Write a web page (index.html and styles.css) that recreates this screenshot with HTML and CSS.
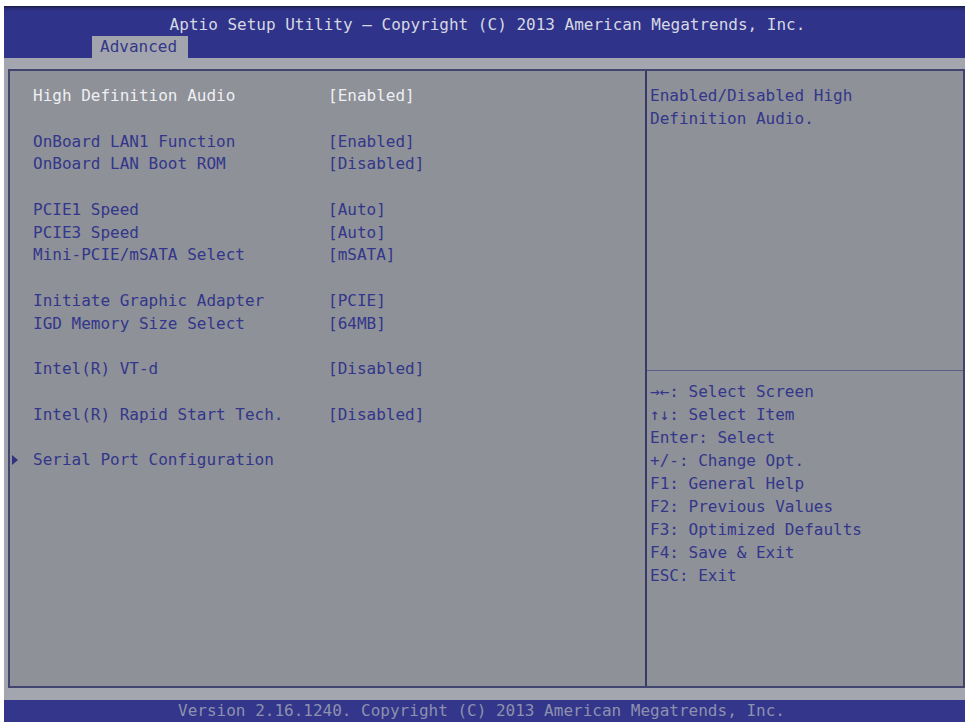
FILE: index.html
```html
<!DOCTYPE html>
<html>
<head>
<meta charset="utf-8">
<link rel="stylesheet" href="styles.css">
</head>
<body>
<div class="screen">
  <header class="header">
    <div class="title">Aptio Setup Utility – Copyright (C) 2013 American Megatrends, Inc.</div>
    <div class="tabs"><div class="tab">Advanced</div></div>
  </header>
  <main class="body">
    <div class="frame">
      <section class="left">
        <div class="row hl"><span class="label">High Definition Audio</span><span class="val">[Enabled]</span></div>
        <div class="row blank"></div>
        <div class="row"><span class="label">OnBoard LAN1 Function</span><span class="val">[Enabled]</span></div>
        <div class="row"><span class="label">OnBoard LAN Boot ROM</span><span class="val">[Disabled]</span></div>
        <div class="row blank"></div>
        <div class="row"><span class="label">PCIE1 Speed</span><span class="val">[Auto]</span></div>
        <div class="row"><span class="label">PCIE3 Speed</span><span class="val">[Auto]</span></div>
        <div class="row"><span class="label">Mini-PCIE/mSATA Select</span><span class="val">[mSATA]</span></div>
        <div class="row blank"></div>
        <div class="row"><span class="label">Initiate Graphic Adapter</span><span class="val">[PCIE]</span></div>
        <div class="row"><span class="label">IGD Memory Size Select</span><span class="val">[64MB]</span></div>
        <div class="row blank"></div>
        <div class="row"><span class="label">Intel(R) VT-d</span><span class="val">[Disabled]</span></div>
        <div class="row blank"></div>
        <div class="row"><span class="label">Intel(R) Rapid Start Tech.</span><span class="val">[Disabled]</span></div>
        <div class="row blank"></div>
        <div class="row sub"><span class="marker"></span><span class="label">Serial Port Configuration</span></div>
      </section>
      <aside class="right">
        <div class="help">
          <div class="line">Enabled/Disabled High</div>
          <div class="line">Definition Audio.</div>
        </div>
        <div class="keys">
          <div class="line">→←: Select Screen</div>
          <div class="line">↑↓: Select Item</div>
          <div class="line">Enter: Select</div>
          <div class="line">+/-: Change Opt.</div>
          <div class="line">F1: General Help</div>
          <div class="line">F2: Previous Values</div>
          <div class="line">F3: Optimized Defaults</div>
          <div class="line">F4: Save &amp; Exit</div>
          <div class="line">ESC: Exit</div>
        </div>
      </aside>
    </div>
  </main>
  <footer class="footer">Version 2.16.1240. Copyright (C) 2013 American Megatrends, Inc.</footer>
</div>
</body>
</html>
```

FILE: styles.css
```css
html, body {
  margin: 0;
  padding: 0;
  background: #ffffff;
}
body {
  font-family: "DejaVu Sans Mono", "Liberation Mono", monospace;
  font-size: 16px;
}
.screen {
  margin: 6px 6px 0 4px;
  width: 961px;
  display: flex;
  flex-direction: column;
}
.header {
  height: 52px;
  background: linear-gradient(#1a1d45 0px, #2b2e7e 3px, #30338a 6px, #30338a 100%);
  display: flex;
  flex-direction: column;
  justify-content: space-between;
}
.title {
  color: #d6d8e2;
  text-align: center;
  padding-top: 10px;
  line-height: 18px;
  padding-left: 6px;
}
.tabs {
  display: flex;
  padding-left: 88px;
}
.tab {
  width: 96px;
  height: 22px;
  background: #a2a5ae;
  color: #353887;
  line-height: 22px;
  padding-left: 8px;
  box-sizing: border-box;
}
.body {
  background: #a3a6ae;
  padding: 11px 0 12px 4px;
}
.frame {
  height: 619px;
  box-sizing: border-box;
  border: 2px solid #40446f;
  background: #8e9198;
  display: flex;
}
.left {
  width: 637px;
  border-right: 2px solid #363a68;
  padding: 14px 0 0 23px;
  box-sizing: border-box;
}
.row {
  display: flex;
  height: 22.75px;
  line-height: 22.75px;
  color: #33368a;
  white-space: pre;
}
.label {
  width: 295px;
}
.hl {
  color: #eeeff3;
}
.marker {
  width: 0;
  height: 0;
  border-left: 6px solid #303380;
  border-top: 5px solid transparent;
  border-bottom: 5px solid transparent;
  margin: 6px 15px 0 -21px;
}
.right {
  flex: 1;
  display: flex;
  flex-direction: column;
  color: #33368a;
}
.help {
  padding: 14px 0 0 3px;
  height: 285px;
  border-bottom: 1px solid #5a5e86;
}
.help .line {
  line-height: 22.5px;
}
.keys {
  padding: 9px 0 0 3px;
}
.keys .line {
  line-height: 23px;
}
.footer {
  height: 22px;
  line-height: 22px;
  background: #33368b;
  color: #8e91ae;
  text-align: center;
  padding-right: 6px;
}
```
